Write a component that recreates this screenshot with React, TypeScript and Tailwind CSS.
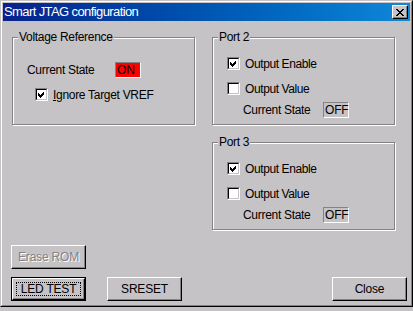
import React from "react";

const font = { fontFamily: '"Liberation Sans", Arial, sans-serif' };

function Check({ checked }: { checked: boolean }) {
  return (
    <div className="w-[13px] h-[13px] border border-t-[#848284] border-l-[#848284] border-b-white border-r-white shrink-0">
      <div className="w-full h-full bg-white border border-t-[#000] border-l-[#000] border-b-[#c6c3c6] border-r-[#c6c3c6] flex items-center justify-center">
        {checked && (
          <svg width="9" height="9" viewBox="0 0 9 9" shapeRendering="crispEdges">
            <path d="M1 3h1v1h1v1h1v-1h1v-1h1v-1h1v3h-1v1h-1v1h-1v1h-1v-1h-1v-1h-1z" fill="#000" />
          </svg>
        )}
      </div>
    </div>
  );
}

function StateBox({ text, red }: { text: string; red?: boolean }) {
  return (
    <div
      className={`w-[26px] h-[16px] border border-t-[#848284] border-l-[#848284] border-b-white border-r-white text-[12px] leading-[14px] pl-[1px] tracking-[-0.2px] ${
        red ? "bg-[#ff0000]" : "bg-[#c6c3c6]"
      }`}
    >
      {text}
    </div>
  );
}

function Group({ title, children, titleWidth }: { title: string; children: React.ReactNode; titleWidth: string }) {
  return (
    <div className="relative w-[183px] h-[88px] border border-[#848284] shadow-[inset_1px_1px_0_#fff,1px_1px_0_#fff]">
      <div className={`absolute -top-[7px] left-[5px] h-[13px] bg-[#c6c3c6] px-[1px] text-[12px] leading-[13px] tracking-[-0.3px] ${titleWidth}`}>
        {title}
      </div>
      {children}
    </div>
  );
}

function Port({ title }: { title: string }) {
  return (
    <Group title={title} titleWidth="">
      <div className="flex flex-col pl-[14px] pt-[19px]">
        <div className="flex items-center gap-[5px] h-[13px]">
          <Check checked />
          <span className="text-[12px] tracking-[-0.4px]">Output Enable</span>
        </div>
        <div className="flex items-center gap-[5px] h-[13px] mt-[12px]">
          <Check checked={false} />
          <span className="text-[12px] tracking-[-0.4px]">Output Value</span>
        </div>
        <div className="flex items-center h-[16px] mt-[7px] pl-[16px]">
          <span className="w-[80px] text-[12px] tracking-[-0.3px]">Current State</span>
          <StateBox text="OFF" />
        </div>
      </div>
    </Group>
  );
}

function Btn({
  label,
  disabled,
  def,
}: {
  label: string;
  disabled?: boolean;
  def?: boolean;
}) {
  const inner = (
    <div className="w-full h-full border border-t-white border-l-white border-b-black border-r-black shadow-[inset_-1px_-1px_0_#848284] flex items-center justify-center relative">
      {def && <div className="absolute inset-[3px] border border-dotted border-black" />}
      <span
        className={`text-[12px] tracking-[-0.2px] ${
          disabled ? "text-[#848284] [text-shadow:1px_1px_0_#fff]" : "text-black"
        }`}
      >
        {label}
      </span>
    </div>
  );
  if (def) {
    return <div className="w-[75px] h-[24px] border border-black">{inner}</div>;
  }
  return <div className="w-[75px] h-[24px]">{inner}</div>;
}

export default function App() {
  return (
    <div className="w-[413px] h-[311px] bg-[#c6c3c6] text-black" style={font}>
      <div className="w-[413px] h-[307px] border border-t-[#c6c3c6] border-l-[#c6c3c6] border-b-black border-r-black">
        <div className="w-full h-full border border-t-white border-l-white border-b-[#848284] border-r-[#848284] p-[1px] flex flex-col">
          <div className="h-[18px] bg-gradient-to-r from-[#08208c] to-[#1088d8] flex items-center pl-[1px] pr-[2px] shrink-0">
            <span className="text-white text-[13px] tracking-[-0.6px] leading-[18px] flex-1">
              Smart JTAG configuration
            </span>
            <div className="w-[16px] h-[14px] bg-[#c6c3c6] border border-t-white border-l-white border-b-black border-r-black shadow-[inset_-1px_-1px_0_#848284] flex items-center justify-center">
              <svg width="8" height="7" viewBox="0 0 8 7" shapeRendering="crispEdges">
                <path d="M0 0h2v1h1v1h2v-1h1v-1h2v1h-1v1h-1v1h-1v1h1v1h1v1h1v1h-2v-1h-1v-1h-2v1h-1v1h-2v-1h1v-1h1v-1h1v-1h-1v-1h-1v-1h-1z" fill="#000" />
              </svg>
            </div>
          </div>
          <div className="flex-1 flex flex-col pl-[8px] pt-[16px]">
            <div className="flex gap-[17px] pl-[1px]">
              <Group title="Voltage Reference" titleWidth="">
                <div className="flex flex-col pt-[24px] pl-[14px]">
                  <div className="flex items-center h-[16px]">
                    <span className="w-[88px] text-[12px] tracking-[-0.3px]">Current State</span>
                    <StateBox text="ON" red />
                  </div>
                  <div className="flex items-center gap-[5px] h-[13px] mt-[10px] pl-[8px]">
                    <Check checked />
                    <span className="text-[12px] tracking-[-0.3px]">
                      <span className="underline">I</span>gnore Target VREF
                    </span>
                  </div>
                </div>
              </Group>
              <div className="flex flex-col gap-[17px]">
                <Port title="Port 2" />
                <Port title="Port 3" />
              </div>
            </div>
            <div className="mt-[15px]">
              <Btn label="Erase ROM" disabled />
            </div>
            <div className="flex mt-[8px] pr-[3px]">
              <Btn label="LED TEST" def />
              <div className="ml-[21px]">
                <Btn label="SRESET" />
              </div>
              <div className="flex-1" />
              <Btn label="Close" />
            </div>
          </div>
        </div>
      </div>
    </div>
  );
}
